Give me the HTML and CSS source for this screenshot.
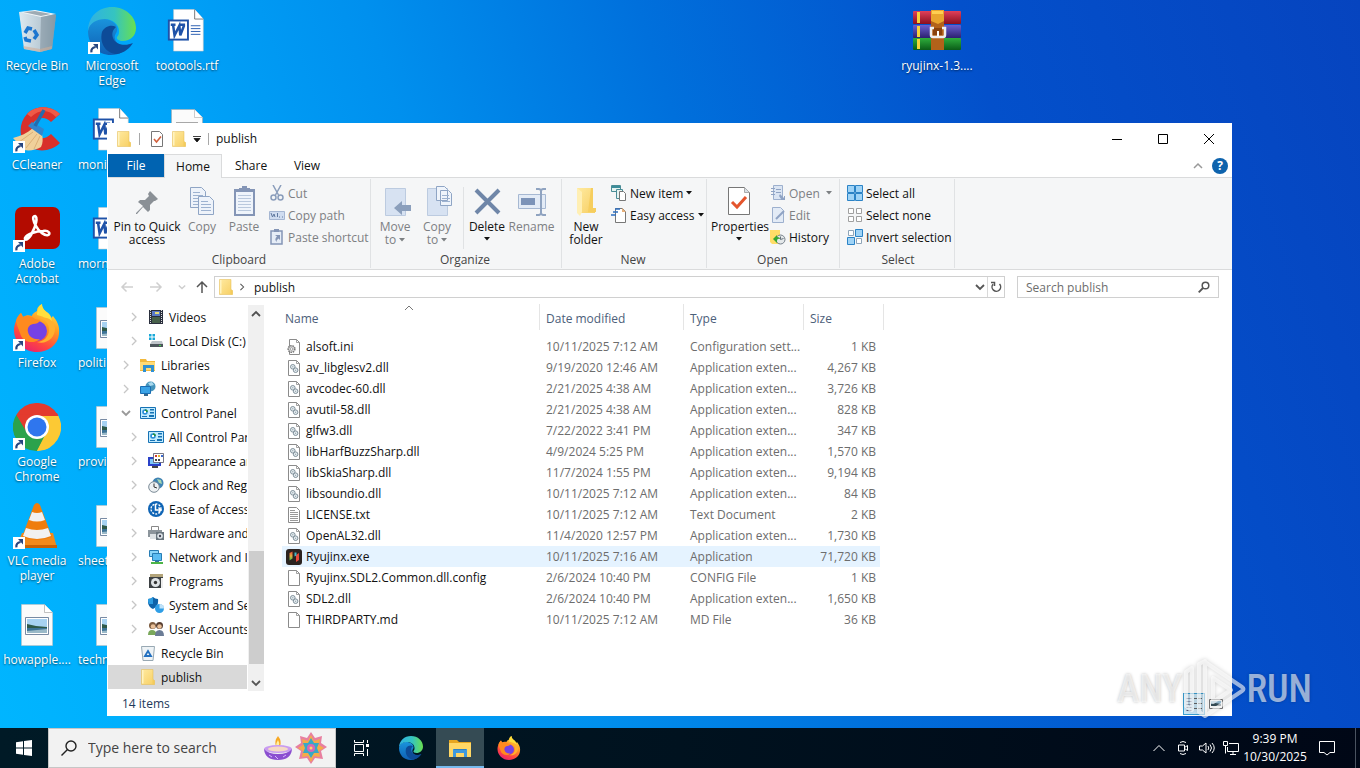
FILE: index.html
```html
<!DOCTYPE html>
<html lang="en">
<head>
<meta charset="utf-8">
<title>publish</title>
<link rel="stylesheet" href="styles.css">
</head>
<body>
<svg class="defs" aria-hidden="true">
  <defs>
    <linearGradient id="gEdgeA" x1="0" y1="0" x2="1" y2="0"><stop offset="0" stop-color="#2fb1e4"/><stop offset=".55" stop-color="#35c4c0"/><stop offset="1" stop-color="#69e04e"/></linearGradient>
    <linearGradient id="gEdgeB" x1="0" y1="0" x2="0" y2="1"><stop offset="0" stop-color="#1a94dc"/><stop offset="1" stop-color="#0f5fb4"/></linearGradient>
    <linearGradient id="gFox" x1=".8" y1="0" x2=".3" y2="1"><stop offset="0" stop-color="#fff04a"/><stop offset=".4" stop-color="#ff9a22"/><stop offset=".75" stop-color="#ff4640"/><stop offset="1" stop-color="#e8216f"/></linearGradient>
    <linearGradient id="gFolder" x1="0" y1="0" x2="1" y2="1"><stop offset="0" stop-color="#ffeaa0"/><stop offset="1" stop-color="#f7cf63"/></linearGradient>
    <linearGradient id="gBin" x1="0" y1="0" x2="1" y2="0"><stop offset="0" stop-color="#e9edf0"/><stop offset=".6" stop-color="#c3ccd3"/><stop offset="1" stop-color="#8fa0ac"/></linearGradient>
    <linearGradient id="gRed" x1="0" y1="0" x2="0" y2="1"><stop offset="0" stop-color="#e0405a"/><stop offset="1" stop-color="#8a1020"/></linearGradient>
    <linearGradient id="gPurple" x1="0" y1="0" x2="0" y2="1"><stop offset="0" stop-color="#6b5fd0"/><stop offset="1" stop-color="#2c2070"/></linearGradient>
    <linearGradient id="gGreen" x1="0" y1="0" x2="0" y2="1"><stop offset="0" stop-color="#2fae3c"/><stop offset="1" stop-color="#0a5c18"/></linearGradient>
    <linearGradient id="gRyu" x1="0" y1="0" x2="0" y2="1"><stop offset="0" stop-color="#e9483a"/><stop offset=".5" stop-color="#e8b040"/><stop offset="1" stop-color="#3ac04c"/></linearGradient>
  </defs>
  <symbol id="shortcut" viewBox="0 0 12 12"><path fill="#fff" d="M0 0h12v12H0z"/><path fill="none" stroke="#27457f" stroke-width="2.2" d="M3.4 10.4C3 7.5 4.5 5.5 7.6 5"/><path fill="#27457f" d="M5 2h5v5.4z"/></symbol>
  <symbol id="edge" viewBox="0 0 48 48">
    <path fill="url(#gEdgeB)" d="M0 24C1 15 9 11 17 12c8 1 13 6 12 12-1 3-3 4-2 8 1 5 9 9 17 4C39 44 31 48 23 48 10 48 0 38 0 24z"/>
    <path fill="#0d4b98" d="M14 25c-3 12 5 22 15 22 7-1 13-6 16-11-6 3-17 3-20-5-2-6 1-9 3-11-5-3-12 0-14 5z"/>
    <path fill="url(#gEdgeA)" d="M0 24C0 9 11 0 24 0c14 0 24 10 24 21 0 8-6 13-13 13-4 0-7-2-6-4 2-2 2-4 2-6 0-7-7-12-14-12C9 12 1 16 0 24z"/>
  </symbol>
  <symbol id="firefox" viewBox="0 0 46 48">
    <path fill="url(#gFox)" d="M2 17c1-4 3-6 5-8l2 4c3-2 6-2 9-1 0-2 3-4 5-5 0-4 3-6 5-7 0 4 2 6 6 9 2 2 3 3 3 5l2-2c4 5 7 10 6 18C44 41 34 48 23 48 10 48 0 38 0 26c0-4 1-6 2-9z"/>
    <path fill="#ffdf3c" d="M28 0c0 4 2 6 6 9 3 3 4 6 4 11l-4-2c-1-4-6-6-11-7 0-4 2-9 5-11z"/>
    <circle cx="23" cy="27" r="10" fill="#7542e5"/>
    <path fill="#ff8a1f" d="M2 17c1-4 3-6 5-8l2 4c4-2 9-1 12 2l5 1c-1 3-4 4-7 4-4 1-6 4-5 8 1 5 6 8 12 7-7 6-18 3-20-6-1-3-3-7-4-12z"/>
    <path fill="#ffb02e" d="M25 14c6 1 10 5 10 12 0 7-6 12-12 12 9 3 18-4 18-13 0-8-7-13-16-11z"/>
  </symbol>
  <symbol id="wordfile" viewBox="0 0 40 46">
    <path fill="#fff" stroke="#c9c9c9" stroke-width=".6" d="M6 .5h22l9 10V44H6z"/><path fill="#fff" stroke="#555" stroke-width=".8" d="M28 .5v10h9"/>
    <path stroke="#2a5db0" stroke-width="1" d="M24 17.5h10M24 20.5h10M24 23.5h10M24 26.5h10"/>
    <path fill="#1f52a8" d="M0 11h22v22H0z"/><path fill="#fff" d="M2 13h18v18H2z"/>
    <path fill="none" stroke="#1f52a8" stroke-width="2.6" d="M3 16.500h5M12 16.500h6M5.500 17l1.500 10.500L12 17.500l1 10L17 17"/>
  </symbol>
  <symbol id="picfile" viewBox="0 0 32 42">
    <path fill="#fbfbfb" stroke="#c4c4c4" stroke-width=".6" d="M.5.500h23l8 8V41.500H.5z"/><path fill="#fff" stroke="#999" stroke-width=".6" d="M23.500.500v8h8"/>
    <path fill="#fff" stroke="#556c8c" stroke-width=".8" d="M4.500 13.500h23v17h-23z"/><path fill="#a7d2f2" d="M6 15h20v8H6z"/><path fill="#2e5948" d="M6 20l9 2 11 1v2H6z"/><path fill="#3d7396" d="M6 24h20v5H6z"/><path fill="#9ab9c8" d="M6 27l20-2v4H6z"/>
  </symbol>
  <symbol id="folder" viewBox="0 0 14 16"><path fill="url(#gFolder)" stroke="#e3b94f" stroke-width=".5" d="M.5.500h11.500v10l1.500 1v4H.5z"/><path fill="#f4cb5c" d="M11.500 10.500l2 1v4h-2z"/><path fill="#fff3c0" d="M1 1h1.500v13.500H1z"/></symbol>
  <symbol id="chev" viewBox="0 0 8 10"><path fill="none" stroke="currentColor" stroke-width="1.300" d="M2 1l4 4-4 4"/></symbol>
  <symbol id="chevdown" viewBox="0 0 10 10"><path fill="none" stroke="currentColor" stroke-width="1.800" d="M1 3l4 4 4-4"/></symbol>
  <symbol id="caret" viewBox="0 0 6 4"><path fill="currentColor" d="M0 0h6L3 3.500z"/></symbol>
  <symbol id="dll" viewBox="0 0 14 16"><path fill="#fff" stroke="#8b8b8b" d="M1.500.500h8l3 3v12h-11z"/><path fill="none" stroke="#8b8b8b" stroke-width=".8" d="M9.500.500v3h3"/><g fill="#e4ecf0" stroke="#80909a"><circle cx="5.800" cy="6.800" r="2.300"/><circle cx="8.600" cy="10.200" r="2.300"/></g><path fill="#80909a" d="M5.300 6.300h1v1h-1zM8.100 9.700h1v1h-1z"/></symbol>
  <symbol id="ini" viewBox="0 0 14 16"><path fill="#fff" stroke="#8b8b8b" d="M2.500.500h7l3 3v12h-10z"/><path fill="none" stroke="#8b8b8b" stroke-width=".8" d="M9.500.500v3h3"/><circle cx="4.500" cy="10" r="3.300" fill="#ddd" stroke="#777" stroke-width="1.600" stroke-dasharray="1.500 .8"/><circle cx="4.500" cy="10" r="1.300" fill="#fff" stroke="#777" stroke-width=".6"/></symbol>
  <symbol id="txt" viewBox="0 0 14 16"><path fill="#fff" stroke="#8b8b8b" d="M1.500.500h8l3 3v12h-11z"/><path stroke="#999" d="M3 3.500h5M3 5.500h8M3 7.500h8M3 9.500h8M3 11.500h8M3 13.500h8"/></symbol>
  <symbol id="blank" viewBox="0 0 14 16"><path fill="#fff" stroke="#8b8b8b" d="M1.500.500h8l3 3v12h-11z"/><path fill="none" stroke="#8b8b8b" stroke-width=".8" d="M9.500.500v3h3"/></symbol>
  <symbol id="ryu" viewBox="0 0 16 16"><rect width="16" height="16" rx="3" fill="#2b2320"/><path fill="url(#gRyu)" d="M3.500 4l3-1.500v7l-3 2z"/><path fill="#e9483a" d="M10 6l3-2v7l-3 2z"/><path fill="#42b9c6" d="M8.500 3.500h2v3l-2 1z"/></symbol>
  <symbol id="cpanel" viewBox="0 0 16 12"><path fill="#bfeaff" stroke="#1672b4" d="M.5.500h15v11H.5z"/><circle cx="5" cy="5" r="2.800" fill="#2d8fd8"/><path fill="#27933e" d="M5 2.200A2.800 2.800 0 0 1 7.800 5H5z"/><path fill="#fff" d="M4 4h2v2H4z"/><path fill="#1672b4" d="M2 9h5v1H2zM10 2h4v1.500h-4zM10 5h4v1.500h-4zM9 8h5v2H9z"/></symbol>
</svg>

<main class="desktop">
  <a href="#" class="shortcut c1 r1"><svg class="pic" viewBox="0 0 48 48"><path fill="url(#gBin)" d="M6 5l37 3-4 34-12 3-16-3z" opacity=".95"/><path fill="#f4f7f9" d="M6 5l16-2 21 4-15 3z"/><path fill="#9eabb4" d="M10 5l12-1 16 3-10 2z"/><path fill="#8495a0" opacity=".6" d="M28 10l15-3-4 35-12 3z"/><path fill="#cfae98" opacity=".6" d="M10 39l17 3 12-3-.4 3L27 45 11 42z"/><g fill="none" stroke="#1c76cf" stroke-width="3.500"><path d="M12 26l3-5 4 1M21 23l3 5-3 4M18 34l-5-1-1-3"/></g></svg><span>Recycle Bin</span></a>
  <a href="#" class="shortcut c2 r1"><svg class="pic"><use href="#edge"/></svg><svg class="badge"><use href="#shortcut"/></svg><span>Microsoft Edge</span></a>
  <a href="#" class="shortcut c3 r1"><svg class="pic doc"><use href="#wordfile"/></svg><span>tootools.rtf</span></a>
  <a href="#" class="shortcut c13 r1"><svg class="pic" viewBox="0 0 48 48"><rect y="4" width="48" height="13" rx="1" fill="url(#gRed)"/><rect y="18" width="48" height="13" rx="1" fill="url(#gPurple)"/><rect y="31" width="48" height="12" rx="1" fill="url(#gGreen)"/><path fill="#f6d33a" d="M4 5h3v11H4zM4 19h3v11H4zM4 32h3v10H4z"/><path fill="#b3621a" d="M18 3h13v40H18z"/><path fill="#e9a52e" d="M18 3h13v11l-6 3-7-3z"/><path fill="#ffcf52" d="M19 4h11v3H19z"/><path fill="#8a420e" d="M20 21h9v7h-9z"/><path fill="none" stroke="#eee" stroke-width="2.500" d="M21 21h-3v7q0 2 2 2h10q2 0 2-2v-7h-3"/><path stroke="#fff" stroke-width="2" d="M25 24v5"/></svg><span class="line">ryujinx-1.3....</span></a>

  <a href="#" class="shortcut c1 r2"><svg class="pic" viewBox="0 0 48 48"><path fill="#d8302b" d="M47 8C38-1 22-1 14 8 5 18 6 32 14 39c9 8 24 7 33-2l-9-9c-5 5-12 6-16 1-4-4-4-10 0-14 5-4 11-4 16 1z"/><path fill="#ef5a47" d="M47 8C38-1 22-1 14 8l4 3C26 3 36 3 43 11z"/><path fill="#f0d09a" d="M20 22c-6 5-12 8-20 10l11 12c6 1 12 0 17-3 2-4 2-8 1-13z"/><path stroke="#dcb077" stroke-width="1" d="M20 26L6 36M24 28L13 42M27 30l-6 13"/><path fill="#2f86cf" d="M15 20l4-4 12 7-2 7z"/><path stroke="#246cae" stroke-width="3.500" d="M22 20L31 4"/></svg><svg class="badge"><use href="#shortcut"/></svg><span>CCleaner</span></a>
  <a href="#" class="shortcut c2 r2 cut"><svg class="pic doc"><use href="#wordfile"/></svg><span>moni</span></a>
  <a href="#" class="shortcut c3 r2"><svg class="pic page" viewBox="0 0 32 42"><path fill="#fbfbfb" stroke="#aaa" stroke-width=".6" d="M.5.500h23l8 8V41.500H.5z"/><path fill="#fff" stroke="#aaa" stroke-width=".6" d="M23.500.500v8h8"/><path stroke="#a8a8a8" d="M5 13.500h22"/></svg></a>

  <a href="#" class="shortcut c1 r3"><svg class="pic" viewBox="0 0 48 48"><rect x="2" y="2" width="45" height="42" rx="7" fill="#b30b00"/><path fill="none" stroke="#fff" stroke-width="2.600" stroke-linejoin="round" d="M22 11c-3 0-2 5 1 10 3 6 9 10 12 9s1-5-5-4c-7 0-16 3-18 7-1 3 4 2 7-5 4-7 6-16 3-17z"/></svg><svg class="badge"><use href="#shortcut"/></svg><span>Adobe Acrobat</span></a>
  <a href="#" class="shortcut c2 r3 cut"><svg class="pic doc"><use href="#wordfile"/></svg><span>morn</span></a>

  <a href="#" class="shortcut c1 r4"><svg class="pic"><use href="#firefox"/></svg><svg class="badge"><use href="#shortcut"/></svg><span>Firefox</span></a>
  <a href="#" class="shortcut c2 r4 cut"><svg class="pic page"><use href="#picfile"/></svg><span>politi</span></a>

  <a href="#" class="shortcut c1 r5"><svg class="pic" viewBox="0 0 48 48"><path fill="#e33b2e" d="M24 24L3.200 12A24 24 0 0 1 44.800 12z"/><path fill="#2ba24c" d="M24 24L24 48A24 24 0 0 1 3.200 12z"/><path fill="#fcc934" d="M24 24L44.800 12A24 24 0 0 1 24 48z"/><path fill="#e33b2e" d="M3.200 12l11 18L24 13h21.300L44 10z"/><path fill="#2ba24c" d="M3.200 12l10.400 18 10.400 5 9-5L24 48 10 43 1 31z"/><path fill="#fcc934" d="M24 13h21.300L48 24l-4 13-10 9-10 2 10-18z"/><circle cx="24" cy="24" r="12" fill="#fff"/><circle cx="24" cy="24" r="9.500" fill="#2f76ee"/></svg><svg class="badge"><use href="#shortcut"/></svg><span>Google Chrome</span></a>
  <a href="#" class="shortcut c2 r5 cut"><svg class="pic page"><use href="#picfile"/></svg><span>provi</span></a>

  <a href="#" class="shortcut c1 r6"><svg class="pic" viewBox="0 0 48 48"><path fill="#f18a1c" d="M9 31h31l4 15H3z"/><path fill="#c96205" d="M3 43h41v3H3z"/><path fill="#ef7d0c" d="M21 3q3-4 6 0l12 32q-15 6-30 0z"/><path fill="#f1f1f1" d="M19 10q5 2 10 0l3 8q-8 3-16 0zM13 26q11 4 22 0l3 8q-14 6-28 0z"/></svg><svg class="badge"><use href="#shortcut"/></svg><span>VLC media player</span></a>
  <a href="#" class="shortcut c2 r6 cut"><svg class="pic page"><use href="#picfile"/></svg><span>sheet</span></a>

  <a href="#" class="shortcut c1 r7"><svg class="pic page"><use href="#picfile"/></svg><span>howapple....</span></a>
  <a href="#" class="shortcut c2 r7 cut"><svg class="pic page"><use href="#picfile"/></svg><span>techn</span></a>
</main>

<section class="window" aria-label="publish">
  <header class="titlebar">
    <svg class="fold"><use href="#folder"/></svg><i class="vsep"></i>
    <button class="plain" aria-label="Properties"><svg class="s16" viewBox="0 0 16 16"><path fill="#fff" stroke="#777" d="M2.500.500h8l3 3v12h-11z"/><path fill="none" stroke="#d1603d" stroke-width="1.600" d="M5 8l2.500 3L12 5.500"/></svg></button>
    <button class="plain" aria-label="New folder"><svg class="fold"><use href="#folder"/></svg></button>
    <button class="plain" aria-label="Customize"><svg class="qat" viewBox="0 0 8 8"><path d="M0 1.500h8M1 3.500h6L4 7z" stroke="#111" fill="#111" stroke-width=".8"/></svg></button>
    <i class="vsep"></i><h1>publish</h1>
    <div class="controls">
      <button aria-label="Minimize"><svg viewBox="0 0 12 12"><path d="M1 6.500h10"/></svg></button>
      <button aria-label="Maximize"><svg viewBox="0 0 12 12"><path d="M1.500 1.500h9v9h-9z"/></svg></button>
      <button aria-label="Close"><svg viewBox="0 0 12 12"><path d="M1 1l10 10M11 1L1 11"/></svg></button>
    </div>
  </header>
  <nav class="tabs">
    <button class="file">File</button><button class="on">Home</button><button>Share</button><button>View</button>
    <div class="help"><button class="plain" aria-label="Collapse"><svg class="s10 dim" viewBox="0 0 10 10"><path fill="none" stroke="currentColor" stroke-width="1.500" d="M1 7l4-4 4 4"/></svg></button>
    <button class="qmark" aria-label="Help">?</button></div>
  </nav>
  <div class="ribbon">
    <div class="group clip"><div class="tools">
      <button class="big pin"><svg viewBox="0 0 32 32"><path fill="#8a9096" d="M19 5l8 8-3 2-1 0-4 4v5l-2 2-5-5-6 7-1 0 0-1 7-7-5-4 2-2h5l4-4-1-2z"/></svg>Pin to Quick access</button>
      <button class="big off"><svg viewBox="0 0 32 32"><g fill="#eef3fa" stroke="#8fa5c5"><path d="M4.500 1.500h11l4 4v16h-15z"/><path d="M12.500 10.500h11l4 4v14h-15z"/></g><path fill="none" stroke="#9db2d0" d="M7 6.500h7M7 9.500h10M7 12.500h5M7 15.500h5M7 18.500h5M15 15.500h7M15 18.500h10M15 21.500h10M15 24.500h10"/></svg>Copy</button>
      <button class="big off"><svg viewBox="0 0 32 32"><path fill="#8495b6" d="M6 3h21v27H6z"/><path fill="#eff4fb" d="M8 6h17v22H8z"/><path fill="#8495b6" d="M14 0h5v2h3v4H11V2h3z"/><path stroke="#b9c8dd" d="M10 9.500h13M10 12.500h13M10 15.500h13M10 18.500h13M10 21.500h13M10 24.500h13"/></svg>Paste</button>
      <div class="small">
        <button class="off"><svg class="s16" viewBox="0 0 16 16"><g fill="none" stroke="#8a9dbb" stroke-width="1.500"><path d="M4 0l5.500 10M12 0L6.500 10"/><circle cx="4.500" cy="12.500" r="2.500"/><circle cx="11.500" cy="12.500" r="2.500"/></g></svg>Cut</button>
        <button class="off"><svg class="s16" viewBox="0 0 16 16"><path fill="#cfdcf0" stroke="#a5b6d2" d="M.5 4.500h15v8H.5z"/><path fill="none" stroke="#5f789f" d="M2 6l1.500 4L5 7l1 3M8.500 6v4M10 10h1M13 10h1"/></svg>Copy path</button>
        <button class="off"><svg class="s16" viewBox="0 0 16 16"><path fill="#e6edf7" stroke="#8495b6" stroke-width="1.500" d="M2 2h11v13H2z"/><path fill="#8495b6" d="M5 0h5v3H5zM6 6h5v5L9.500 9.500Q7 11 7.500 13 5 10 8 7.500z"/></svg>Paste shortcut</button>
      </div></div><div class="caption">Clipboard</div></div>
    <div class="group org"><div class="tools">
      <button class="big off"><svg viewBox="0 0 32 32"><path fill="#d7e2f2" stroke="#bccbe0" d="M6.500 2.500h20v27h-20z"/><path fill="#8b9fbc" d="M15 22l8-7v4h9v6h-9v4z"/></svg>Move to <svg class="car"><use href="#caret"/></svg></button>
      <button class="big off"><svg viewBox="0 0 32 32"><path fill="#d7e2f2" stroke="#bccbe0" d="M6.500 2.500h20v27h-20z"/><g fill="#eff4fb" stroke="#8fa5c5"><path d="M15.500.500h8l3 3v11h-11zM19.500 4.500h8l3 3v12h-11z"/></g><path stroke="#9db2d0" d="M21 9.500h7M21 12.500h8M21 15.500h8"/></svg>Copy to <svg class="car"><use href="#caret"/></svg></button>
      <i class="tsep"></i>
      <button class="big"><svg viewBox="0 0 32 32"><path stroke="#6f86a8" stroke-width="4" d="M5 4l23 23M28 4L5 27"/></svg>Delete<svg class="car under"><use href="#caret"/></svg></button>
      <button class="big off ren"><svg viewBox="0 0 32 32"><path fill="#e3ebf6" stroke="#a6b8d2" d="M2.500 8.500h27v14h-27z"/><path fill="#7c93b8" d="M5 12h14v7H5z"/><path fill="none" stroke="#8fa3c0" stroke-width="2" d="M20 3h3l2 1 2-1h3M25 4v24M20 29h3l2-1 2 1h3"/></svg>Rename</button>
      </div><div class="caption">Organize</div></div>
    <div class="group new"><div class="tools">
      <button class="big"><svg viewBox="0 0 32 32"><path fill="url(#gFolder)" d="M7 2h14v23l4 1v1H7z"/><path fill="#ffefb4" d="M7 2l5 4v20l-2 4-3-3z"/><path fill="#f6ce5e" d="M21 2h2v20h3v4h-8z"/></svg>New folder</button>
      <div class="small">
        <button><svg class="s16" viewBox="0 0 16 16"><g fill="#e6f3f1" stroke="#4a8c96"><path d="M.5.500h9v6h-9z"/><path d="M5.500 4.500h6v9h-6z"/></g><path fill="#fff" stroke="#777" d="M8.500 6.500h4l2 2v7h-6z"/><path stroke="#3b8d9a" stroke-width="2" d="M1 2h8"/></svg>New item <svg class="car"><use href="#caret"/></svg></button>
        <button><svg class="s16" viewBox="0 0 16 16"><path fill="#fff" stroke="#777" d="M4.500 1.500h7l3 3v11h-10z"/><path fill="none" stroke="#2e6fc0" stroke-width="1.300" d="M4 2h5M2 5h5M0 8h5"/><path fill="#e7b07a" d="M11 1l4 4h-4z"/></svg>Easy access <svg class="car"><use href="#caret"/></svg></button>
      </div></div><div class="caption">New</div></div>
    <div class="group open"><div class="tools">
      <button class="big prop"><svg viewBox="0 0 32 32"><path fill="#fff" stroke="#777" d="M5.500 1.500h16l5 5v22h-21z"/><path fill="#d9dfe5" stroke="#999" stroke-width=".8" d="M21.500 1.500v5h5"/><path fill="none" stroke="#e4552d" stroke-width="3" d="M9 16l5 5L23 11"/></svg>Properties<svg class="car under"><use href="#caret"/></svg></button>
      <div class="small">
        <button class="off"><svg class="s16" viewBox="0 0 16 16"><path fill="#dbe5f3" stroke="#9db0ce" d="M3.500.500h9v14h-9z"/><path stroke="#8fa3c4" d="M1 3.500h4M1 6.500h4M1 9.500h4M6 4.500h5M6 7.500h5"/><path fill="#8fa3c4" d="M10 9l4 4v-2h1v4h-4v-1l-2-3z"/></svg>Open <svg class="car wide"><use href="#caret"/></svg></button>
        <button class="off"><svg class="s16" viewBox="0 0 16 16"><path fill="#e3ebf6" stroke="#9db0ce" d="M2.500.500h8l3 3v12h-11z"/><path stroke="#8fa3c4" stroke-width="2" d="M6 12l8-8"/></svg>Edit</button>
        <button><svg class="s16" viewBox="0 0 16 16"><path fill="#ffdd68" d="M0 1h10v14H2L0 13z"/><circle cx="10.500" cy="10.500" r="4.500" fill="#e4e8ea" stroke="#75808a"/><path fill="none" stroke="#66727c" d="M10.500 7.500v3l3-1"/><path fill="#38a632" d="M3 10l4-4v2q3 0 3 2-3-1-3 2v2z"/></svg>History</button>
      </div></div><div class="caption">Open</div></div>
    <div class="group sel"><div class="tools">
      <div class="small">
        <button><svg class="s16" viewBox="0 0 16 16"><path fill="#9fd3f6" stroke="#2b83c6" d="M.5.500h7v7h-7zM8.500.500h7v7h-7zM.5 8.500h7v7h-7zM8.500 8.500h7v7h-7z"/></svg>Select all</button>
        <button><svg class="s16" viewBox="0 0 16 16"><path fill="#fff" stroke="#a0a0a0" d="M1.500 1.500h5v5h-5zM9.500 1.500h5v5h-5zM1.500 9.500h5v5h-5zM9.500 9.500h5v5h-5z"/></svg>Select none</button>
        <button><svg class="s16" viewBox="0 0 16 16"><path fill="#fff" stroke="#8fa5b8" d="M1.500 1.500h5v5h-5zM9.500 9.500h5v5h-5z"/><path fill="#9fd3f6" stroke="#2b83c6" d="M8.500.500h7v7h-7zM.5 8.500h7v7h-7z"/></svg>Invert selection</button>
      </div></div><div class="caption">Select</div></div>
  </div>

  <div class="navbar">
    <button class="plain faint" aria-label="Back"><svg class="s14" viewBox="0 0 14 14"><path d="M13 7H2M6.500 2.500L2 7l4.500 4.500"/></svg></button>
    <button class="plain faint" aria-label="Forward"><svg class="s14" viewBox="0 0 14 14"><path d="M1 7h11M7.500 2.500L12 7l-4.500 4.500"/></svg></button>
    <button class="plain faint recent" aria-label="Recent"><svg class="s8"><use href="#chevdown"/></svg></button>
    <button class="plain up" aria-label="Up"><svg class="s14" viewBox="0 0 14 14"><path d="M7 13V2M2 7l5-5 5 5"/></svg></button>
    <div class="address"><svg class="fold"><use href="#folder"/></svg><svg class="s8 grey"><use href="#chev"/></svg><span class="crumb">publish</span>
      <button class="plain grey" aria-label="Locations"><svg class="s10"><use href="#chevdown"/></svg></button>
      <button class="plain refresh" aria-label="Refresh"><svg class="s12" viewBox="0 0 12 12"><path fill="none" stroke="#555" stroke-width="1.500" d="M9.500 3A4.300 4.300 0 1 1 3 3.200M1 1.500h3.500V5"/></svg></button>
    </div>
    <label class="search"><input type="search" placeholder="Search publish" aria-label="Search publish"><svg class="s12" viewBox="0 0 12 12"><circle cx="7.500" cy="4.500" r="3.300" fill="none" stroke="#555" stroke-width="1.500"/><path stroke="#555" stroke-width="1.800" d="M5 7L.7 11.300"/></svg></label>
  </div>

  <div class="body">
    <ul class="tree">
      <li class="sub"><svg class="tw"><use href="#chev"/></svg><svg class="s16" viewBox="0 0 16 16"><path fill="#2a2f3d" d="M1 1h14v14H1z"/><path fill="#5a7ac8" d="M4 2h8v5H4z"/><path fill="#47604a" d="M4 8h8v6H4z"/><path fill="#e5dc78" d="M7 3h4v2H7z"/><path stroke="#ddd" stroke-dasharray="1 1" d="M2.500 1v14M13.500 1v14"/></svg>Videos</li>
      <li class="sub"><svg class="tw"><use href="#chev"/></svg><svg class="s16" viewBox="0 0 16 16"><path fill="#18a8d8" d="M1 1h2.500v2.500H1zM4.500 1H7v2.500H4.500zM1 4.500h2.500V7H1zM4.500 4.500H7V7H4.500z"/><path fill="#bfc5ca" d="M4 8h10l1 3H2z"/><path fill="#4d565c" d="M2 11h13v3H2z"/><path fill="#42d34a" d="M11 12h2v1h-2z"/></svg>Local Disk (C:)</li>
      <li><svg class="tw"><use href="#chev"/></svg><svg class="s16" viewBox="0 0 16 16"><path fill="#f2b93c" d="M0 2h6l1 2h8v10H0z"/><path fill="#ffdb76" d="M0 5h15v8H0z"/><path fill="#2f91d3" d="M3 8h11v7h-3v-4H6v4H3z"/></svg>Libraries</li>
      <li><svg class="tw"><use href="#chev"/></svg><svg class="s16" viewBox="0 0 16 16"><circle cx="10.500" cy="5.500" r="5" fill="#4594bb"/><path fill="#a9d9ee" d="M8 2l4-1 2 3-4 1z"/><path fill="#3aa3e6" stroke="#1a6eb3" d="M.5 5.500h10v7H.5z"/><path fill="#35698d" d="M4 13h4v2H4z"/></svg>Network</li>
      <li><svg class="tw open-tw"><use href="#chevdown"/></svg><svg class="s16"><use href="#cpanel"/></svg>Control Panel</li>
      <li class="sub"><svg class="tw"><use href="#chev"/></svg><svg class="s16"><use href="#cpanel"/></svg>All Control Panel Items</li>
      <li class="sub"><svg class="tw"><use href="#chev"/></svg><svg class="s16" viewBox="0 0 16 16"><path fill="#2a41c8" d="M0 4h13v9H0z"/><path fill="#7ec7f7" d="M2 6h9v5H2z"/><path fill="#fff" stroke="#556" stroke-width=".8" d="M5.500.500h10v9h-10z"/><path fill="#d33c2c" d="M7 2h2v2H7z"/><path fill="#e7b52c" d="M10 2h2v2h-2z"/><path fill="#3a6ad0" d="M13 2h2v2h-2z"/><path fill="#444" d="M7 6h2v2H7zM10 6h2v2h-2zM4 13h6v2H4z"/></svg>Appearance and Personalization</li>
      <li class="sub"><svg class="tw"><use href="#chev"/></svg><svg class="s16" viewBox="0 0 16 16"><circle cx="10" cy="6" r="5.500" fill="#3f83b3"/><path fill="#a7d6b0" d="M9 2l4 1 1 4-3-1z"/><circle cx="6" cy="10" r="5.300" fill="#eef1f3" stroke="#7b8a96"/><path fill="none" stroke="#333" d="M6 6.500V10l3 1"/></svg>Clock and Region</li>
      <li class="sub"><svg class="tw"><use href="#chev"/></svg><svg class="s16" viewBox="0 0 16 16"><circle cx="8" cy="8" r="8" fill="#0f64b5"/><circle cx="8" cy="8" r="5" fill="none" stroke="#fff" stroke-width="1.300" stroke-dasharray="2 1.200"/><path fill="none" stroke="#fff" stroke-width="1.500" d="M7.500 3v6H13M10.500 6.500L13 9l-2.500 2.500"/></svg>Ease of Access</li>
      <li class="sub"><svg class="tw"><use href="#chev"/></svg><svg class="s16" viewBox="0 0 16 16"><path fill="#fff" stroke="#888" d="M3.500 1.500h7v4h-7z"/><path fill="#8c959c" d="M0 5h14v7H0z"/><path fill="#dde2e5" d="M2 9h7v5H2z"/><path fill="#69757e" d="M8 7h8v8H8z"/><circle cx="12" cy="11" r="2.800" fill="#dfe6ea"/><circle cx="12" cy="11" r="1.200" fill="#445"/></svg>Hardware and Sound</li>
      <li class="sub"><svg class="tw"><use href="#chev"/></svg><svg class="s16" viewBox="0 0 16 16"><path fill="#8cd6fa" stroke="#287db5" d="M1.500 1.500h9v6h-9z"/><path fill="#5bbcf2" stroke="#287db5" d="M4.500 4.500h9v7h-9z"/><path fill="#347595" d="M7 12h4v2H7z"/><path fill="#4db548" d="M3 13h12v2H3z"/></svg>Network and Internet</li>
      <li class="sub"><svg class="tw"><use href="#chev"/></svg><svg class="s16" viewBox="0 0 16 16"><path fill="#b3a47a" d="M2 1h13v3H2z"/><path fill="#3c4043" d="M1 4h14v11H1z"/><circle cx="7.500" cy="9.500" r="4.500" fill="#dfe3e6"/><circle cx="7.500" cy="9.500" r="1.700" fill="#333"/><path fill="#eee" d="M13 5h2v10h-2z"/></svg>Programs</li>
      <li class="sub"><svg class="tw"><use href="#chev"/></svg><svg class="s16" viewBox="0 0 16 16"><path fill="#0e62a8" d="M0 2q3 0 5-2 2 2 5 2 1 7-5 10-6-3-5-10z"/><path fill="#2d9ce0" d="M5 0Q3 2 0 2q-.3 3 1 5h4z"/><circle cx="11.500" cy="11.500" r="4.500" fill="#2f9ee6"/><path fill="#fff" d="M11.500 11.500V7a4.500 4.500 0 0 1 4.500 4.500z" opacity=".7"/></svg>System and Security</li>
      <li class="sub"><svg class="tw"><use href="#chev"/></svg><svg class="s16" viewBox="0 0 16 16"><circle cx="4.500" cy="4.500" r="3.500" fill="#7d5b3e"/><circle cx="5" cy="5.500" r="2.300" fill="#e9bf98"/><path fill="#7aa85b" d="M0 14q0-5 4-5t5 5z"/><circle cx="11.500" cy="4.500" r="3.500" fill="#553c30"/><circle cx="11.500" cy="5.500" r="2.300" fill="#e9bf98"/><path fill="#6b7c96" d="M7 15q0-6 4.500-6t4.500 6z"/></svg>User Accounts</li>
      <li class="notw"><svg class="s16" viewBox="0 0 16 16"><path fill="#eef3f6" stroke="#98a8b3" d="M1.500 1.500h13l-1.500 14H3z"/><path fill="none" stroke="#2270c0" stroke-width="1.800" d="M5 11l3-5 3 5zM7 11h2"/></svg>Recycle Bin</li>
      <li class="notw current"><svg class="s16"><use href="#folder"/></svg>publish</li>
    </ul>
    <div class="scroll"><svg class="s10" viewBox="0 0 10 10"><path fill="none" stroke="#505050" stroke-width="1.800" d="M1 7l4-4 4 4"/></svg><i class="thumb"></i><svg class="s10 grey"><use href="#chevdown"/></svg></div>
    <div class="files">
      <table>
        <thead><tr><th class="n">Name<svg class="sort" viewBox="0 0 10 6"><path fill="none" stroke="#777" d="M1 5l4-4 4 4"/></svg></th><th class="d">Date modified</th><th class="t">Type</th><th class="s">Size</th></tr></thead>
        <tbody>
          <tr class="gap"><td colspan="4"></td></tr>
          <tr><td><svg class="fi"><use href="#ini"/></svg>alsoft.ini</td><td>10/11/2025 7:12 AM</td><td>Configuration sett...</td><td>1 KB</td></tr>
          <tr><td><svg class="fi"><use href="#dll"/></svg>av_libglesv2.dll</td><td>9/19/2020 12:46 AM</td><td>Application exten...</td><td>4,267 KB</td></tr>
          <tr><td><svg class="fi"><use href="#dll"/></svg>avcodec-60.dll</td><td>2/21/2025 4:38 AM</td><td>Application exten...</td><td>3,726 KB</td></tr>
          <tr><td><svg class="fi"><use href="#dll"/></svg>avutil-58.dll</td><td>2/21/2025 4:38 AM</td><td>Application exten...</td><td>828 KB</td></tr>
          <tr><td><svg class="fi"><use href="#dll"/></svg>glfw3.dll</td><td>7/22/2022 3:41 PM</td><td>Application exten...</td><td>347 KB</td></tr>
          <tr><td><svg class="fi"><use href="#dll"/></svg>libHarfBuzzSharp.dll</td><td>4/9/2024 5:25 PM</td><td>Application exten...</td><td>1,570 KB</td></tr>
          <tr><td><svg class="fi"><use href="#dll"/></svg>libSkiaSharp.dll</td><td>11/7/2024 1:55 PM</td><td>Application exten...</td><td>9,194 KB</td></tr>
          <tr><td><svg class="fi"><use href="#dll"/></svg>libsoundio.dll</td><td>10/11/2025 7:12 AM</td><td>Application exten...</td><td>84 KB</td></tr>
          <tr><td><svg class="fi"><use href="#txt"/></svg>LICENSE.txt</td><td>10/11/2025 7:12 AM</td><td>Text Document</td><td>2 KB</td></tr>
          <tr><td><svg class="fi"><use href="#dll"/></svg>OpenAL32.dll</td><td>11/4/2020 12:57 PM</td><td>Application exten...</td><td>1,730 KB</td></tr>
          <tr class="hover"><td><svg class="fi"><use href="#ryu"/></svg>Ryujinx.exe</td><td>10/11/2025 7:16 AM</td><td>Application</td><td>71,720 KB</td></tr>
          <tr><td><svg class="fi"><use href="#blank"/></svg>Ryujinx.SDL2.Common.dll.config</td><td>2/6/2024 10:40 PM</td><td>CONFIG File</td><td>1 KB</td></tr>
          <tr><td><svg class="fi"><use href="#dll"/></svg>SDL2.dll</td><td>2/6/2024 10:40 PM</td><td>Application exten...</td><td>1,650 KB</td></tr>
          <tr><td><svg class="fi"><use href="#blank"/></svg>THIRDPARTY.md</td><td>10/11/2025 7:12 AM</td><td>MD File</td><td>36 KB</td></tr>
        </tbody>
      </table>
    </div>
  </div>
  <footer class="status"><span>14 items</span>
    <button class="view on" aria-label="Details"><svg class="s16" viewBox="0 0 16 16"><path fill="none" stroke="#557" stroke-dasharray="2 1" d="M.5 2.500h5M.5 5.500h5M.5 8.500h5M.5 11.500h5M.5 14.500h5"/><path stroke="#666" d="M8 2.500h3M12 2.500h4M8 7.500h3M12 7.500h4M8 12.500h3M12 12.500h4"/></svg></button>
    <button class="view" aria-label="Large icons"><svg class="s14" viewBox="0 0 14 14"><path fill="#fff" stroke="#777" d="M.5 2.500h13v9H.5z"/><path fill="#9fc5dd" d="M2 4h10v3H2z"/><path fill="#39505a" d="M2 7l4-1 6 1v2H2z"/></svg></button>
  </footer>
</section>

<div class="watermark"><span>ANY</span><svg viewBox="0 0 64 62"><path fill="none" stroke="currentColor" stroke-width="4" stroke-linejoin="round" d="M4 14v34l6 4V10zM17 6v48l6 4V3zM23 4l37 25q3 2 0 4L23 58M31 20v24l18-12z"/></svg><span>RUN</span></div>

<footer class="taskbar">
  <button class="start" aria-label="Start"><svg class="s16" viewBox="0 0 16 16"><path fill="#fff" d="M0 2.200L7 1.200v6.300H0zM8 1l8-1v7.500H8zM0 8.500h7v6.300l-7-1zM8 8.500h8V16l-8-1z"/></svg></button>
  <label class="find"><svg class="s16" viewBox="0 0 16 16"><circle cx="10" cy="6" r="5" fill="none" stroke="#222" stroke-width="1.400"/><path stroke="#222" stroke-width="1.400" d="M6.500 9.500L.5 15.500"/></svg><input type="text" placeholder="Type here to search" aria-label="Type here to search">
    <svg class="fest" viewBox="0 0 64 34"><path fill="#f7a823" d="M15 5q4 5 2 10h-4q-2-5 2-10z"/><path fill="#fff0a0" d="M15 9q2 3 1 6h-3q0-3 2-6z"/><ellipse cx="15" cy="18" rx="14" ry="4" fill="#c99cf0"/><ellipse cx="15" cy="18" rx="10" ry="2.500" fill="#f5d9c5"/><path fill="#8b4fd0" d="M1 18q4 5 14 5t14-5q-1 11-14 11T1 18z"/><path stroke="#d9b6ff" d="M6 24l3 2M12 25l3 3M23 24l-3 2"/><path fill="#e87f9f" d="M48 1l4 6 7-2-1 7 6 4-6 4 2 8-8-1-4 6-4-6-8 1 2-8-6-4 6-4-1-7 7 2z"/><path fill="#f4ac48" d="M48 4l3 6 6-2-1 6 5 3-5 3 1 6-6-1-3 6-3-6-6 1 1-6-5-3 5-3-1-6 6 2z"/><path fill="#38a8c6" d="M48 7l3 5 5 0-2 5 2 5-5 0-3 5-3-5-5 0 2-5-2-5 5 0z"/><circle cx="48" cy="17" r="4" fill="#d868b4"/><circle cx="48" cy="17" r="1.500" fill="#ffd564"/></svg></label>
  <button class="task tv" aria-label="Task view"><svg class="s16" viewBox="0 0 16 16"><path fill="none" stroke="#fff" d="M1.500 4.500h9v7h-9zM1.500 0v2.500h9V0M1.500 16v-2.500h9V16M14.500 0v3M14.500 9v7"/><path fill="#fff" d="M13 4h3v3h-3z"/></svg></button>
  <button class="task" aria-label="Edge"><svg class="s24"><use href="#edge"/></svg></button>
  <button class="task active" aria-label="File Explorer"><svg class="s24" viewBox="0 0 24 24"><path fill="#e7a61f" d="M1 4h8l2 2h12v4H1z"/><path fill="#ffd765" d="M1 7h22v14H1z"/><path fill="#3f9ade" d="M5 13h14v8h-3v-4H8v4H5z"/><path fill="#2f7fbd" d="M6 13h12v1H6z"/></svg></button>
  <button class="task" aria-label="Firefox"><svg class="s24"><use href="#firefox"/></svg></button>
  <div class="tray">
    <button aria-label="Hidden icons"><svg class="s12" viewBox="0 0 12 12"><path d="M.5 9L6 3.500 11.500 9"/></svg></button>
    <button aria-label="Meet now"><svg class="s16" viewBox="0 0 16 16"><path d="M3.500 5h6v6h-6zM9.500 7.500L12.500 5.500v5l-3-2M5 2.500q3-2 6 0M5 13.500q3 2 6 0"/></svg></button>
    <button aria-label="Volume"><svg class="s16" viewBox="0 0 16 16"><path d="M.5 6h3l3.500-3v10L3.500 10h-3zM9 6q1.500 2 0 4M11 4.500q3 3.500 0 7M13 3q4.500 5 0 10"/></svg></button>
    <button aria-label="Network"><svg class="s16" viewBox="0 0 16 16"><path d="M.5 1.500h4v4h-4zM6 3.500h9.500v8H4.500V7M2.500 5.500v8M7 14.500h6M10 11.500v3"/></svg></button>
    <div class="clock"><time>9:39 PM</time><time>10/30/2025</time></div>
    <button class="note" aria-label="Notifications"><svg class="s16" viewBox="0 0 16 16"><path d="M.5 1.500h15v11H11L8 15l-3-2.500H.5z"/></svg></button>
    <button class="peek" aria-label="Show desktop"></button>
  </div>
</footer>
</body>
</html>
```
FILE: styles.css
```css
* { box-sizing: border-box; }
body {
  margin: 0;
  min-height: 100vh;
  display: flex;
  flex-direction: column;
  position: relative;
  overflow: hidden;
  font: 12px/15px "Open Sans", sans-serif;
  color: #111;
  background: linear-gradient(72deg, #00b6ff 0%, #00a6fa 22%, #0090ee 38%, #0070dc 55%, #0350cb 75%, #0644bf 100%);
}
button { font: inherit; color: inherit; background: none; border: 0; padding: 0; }
svg { display: block; flex: none; }
.defs { position: absolute; width: 0; height: 0; }
.s8 { width: 8px; height: 8px; }
.s10 { width: 10px; height: 10px; }
.s12 { width: 12px; height: 12px; }
.s14 { width: 14px; height: 14px; }
.s16 { width: 16px; height: 16px; }
.s24 { width: 24px; height: 24px; }
.fold { width: 14px; height: 16px; }
.grey { color: #555; }
.dim { color: #999; }

/* Desktop */
.desktop {
  flex: 1;
  display: grid;
  grid-template-columns: repeat(13, 75px);
  grid-auto-rows: 99px;
  align-content: start;
}
.shortcut {
  position: relative;
  display: flex;
  flex-direction: column;
  align-items: center;
  padding: 7px 4px 0 3px;
  color: #fff;
  text-align: center;
  text-decoration: none;
  text-shadow: 0 1px 2px rgba(0, 0, 0, .6);
}
.pic { width: 48px; height: 48px; margin-bottom: 3px; }
.pic.doc { padding: 2px 0; }
.pic.page { padding: 3px 0; }
.badge { position: absolute; left: 13px; top: 42px; width: 12px; height: 12px; }
.cut span { align-self: flex-start; }
.line { white-space: nowrap; }
.c1 { grid-column: 1; } .c2 { grid-column: 2; } .c3 { grid-column: 3; } .c13 { grid-column: 13; }
.r1 { grid-row: 1; } .r2 { grid-row: 2; } .r3 { grid-row: 3; } .r4 { grid-row: 4; }
.r5 { grid-row: 5; } .r6 { grid-row: 6; } .r7 { grid-row: 7; }

/* Window */
.window {
  position: absolute;
  inset: 123px 128px 52px 107px;
  display: flex;
  flex-direction: column;
  padding-left: 1px;
  background: #fff;
}
.titlebar { display: flex; align-items: center; height: 31px; padding-left: 9px; }
.titlebar .vsep { width: 1px; height: 12px; background: #a8a8a8; margin: 0 9px 0 8px; }
.titlebar .plain { margin-right: 7px; }
.qat { width: 8px; height: 8px; }
.titlebar .plain + .vsep { margin: 0 7px 0 0; }
.titlebar h1 { margin: 0; font-size: 12px; font-weight: 400; }
.controls { display: flex; align-self: stretch; margin-left: auto; }
.controls button { width: 46px; display: grid; place-items: center; }
.controls svg { width: 12px; height: 12px; fill: none; stroke: #000; stroke-width: 1; }

.tabs { display: flex; height: 24px; border-bottom: 1px solid #dadbdc; }
.tabs > button { width: 56px; }
.tabs .file { background: #0063b1; color: #fff; }
.tabs .on { width: 58px; margin: 0 1px -1px 0; background: #f5f6f7; border: 1px solid #dadbdc; border-bottom: 0; }
.help { display: flex; align-items: center; gap: 9px; margin-left: auto; padding-right: 4px; }
.qmark { width: 16px; height: 16px; border-radius: 8px; background: #0e63ad; color: #fff; font-weight: 700; }

.ribbon { display: flex; height: 92px; padding: 1px 0; background: #f5f6f7; border-bottom: 1px solid #dadbdc; }
.group { display: flex; flex-direction: column; justify-content: space-between; border-right: 1px solid #e0e2e4; }
.clip { width: 263px; padding-left: 5px; }
.org { width: 191px; padding-left: 3px; }
.new { width: 145px; padding-left: 3px; }
.open { width: 133px; padding-left: 4px; }
.sel { width: 115px; padding-left: 7px; }
.tools { display: flex; }
.big { width: 42px; padding-top: 7px; align-self: flex-start; line-height: 13px; }
.big > svg:first-child { width: 32px; height: 32px; margin: 0 auto 2px; }
.pin { width: 68px; }
.ren { width: 47px; }
.prop { width: 55px; }
.car { display: inline-block; width: 6px; height: 4px; vertical-align: 2px; }
.car.under { display: block; margin: 4px auto 0; }
.car.wide { margin-left: 3px; }
.off { color: #7d8083; }
.tsep { width: 1px; height: 62px; margin: 8px 2px 0 5px; background: #e0e2e4; }
.small { display: flex; flex-direction: column; padding: 3px 0 0 4px; }
.sel .small { padding-left: 0; }
.small button { display: flex; align-items: center; gap: 3px; height: 22px; white-space: nowrap; }
.caption { height: 18px; line-height: 20px; padding-right: 5px; text-align: center; color: #444; }

.navbar { display: flex; align-items: center; height: 34px; padding: 0 13px 0 12px; }
.navbar > .plain svg { fill: none; stroke: currentColor; stroke-width: 1.5; }
.navbar > .plain { margin-right: 15px; }
.faint { color: #cfcfcf; }
.navbar > .recent { margin-right: 9px; }
.navbar > .up { margin-right: 5px; color: #555; }
.address { flex: 1; display: flex; align-items: center; height: 22px; padding-left: 4px; border: 1px solid #d0d0d0; }
.address > .s8 { margin: 0 8px 0 5px; }
.crumb { flex: 1; }
.refresh { align-self: stretch; width: 17px; margin-left: 2px; border-left: 1px solid #d9d9d9; display: grid; place-items: center; }
.search { display: flex; align-items: center; width: 202px; height: 22px; margin-left: 12px; padding: 0 8px; border: 1px solid #d0d0d0; }
.search input { flex: 1; min-width: 0; border: 0; padding: 0; outline: 0; font: inherit; background: none; }
.search input::placeholder { color: #6d6d6d; opacity: 1; }

.body { flex: 1; display: flex; min-height: 0; }
.tree { width: 139px; margin: 0; padding: 1px 0 0; list-style: none; overflow: hidden; }
.tree li { display: flex; align-items: center; height: 24px; padding-left: 14px; white-space: nowrap; }
.tree li > .s16 { margin-right: 5px; }
.tree .sub { padding-left: 22px; }
.tree .notw { padding-left: 32px; }
.tw { width: 8px; height: 10px; margin-right: 10px; color: #c6c6c6; }
.tree .current { background: #d9d9d9; }
.open-tw { width: 10px; margin: 0 9px 0 -1px; color: #999; }
.scroll { width: 16px; margin: 1px 0 0 1px; display: flex; flex-direction: column; align-items: center; padding: 4px 0 3px; background: #f0f0f0; }
.thumb { width: 15px; height: 113px; margin-top: auto; margin-bottom: 14px; background: #cdcdcd; }
.files { flex: 1; padding: 0 0 0 18px; }
table { width: 602px; table-layout: fixed; border-collapse: separate; border-spacing: 0; }
th { height: 26px; padding: 2px 3px 0 6px; text-align: left; font-weight: 400; color: #4c607a; border-right: 1px solid #e5e5e5; }
.n { width: 258px; padding-left: 3px; position: relative; }
.d { width: 144px; } .t { width: 120px; } .s { width: 80px; }
.sort { position: absolute; left: 122px; top: 1px; width: 10px; height: 6px; }
td { height: 21px; padding: 0 6px; color: #6d6d6d; white-space: nowrap; }
.gap td { height: 6px; }
td:first-child { display: flex; align-items: center; padding: 0 0 0 4px; color: #111; }
td:last-child:not(:first-child) { padding: 0 4px 0 0; border-right: 4px solid transparent; background-clip: padding-box; text-align: right; }
.fi { width: 16px; height: 16px; margin-right: 4px; }
.hover td { background-color: #e5f3ff; }
.status { display: flex; align-items: center; height: 25px; padding: 0 5px 0 14px; color: #1e395b; }
.status span { flex: 1; }
.view { width: 22px; height: 22px; display: grid; place-items: center; }
.view.on { background: #cce8f8; border: 1px solid #3aa0d4; }

/* Watermark */
.watermark {
  position: absolute;
  right: 48px;
  bottom: 48px;
  display: flex;
  align-items: center;
  font: 500 38px/62px "Liberation Sans Narrow", "Roboto Condensed", "Roboto", sans-serif;
  color: rgba(255, 255, 255, .6);
  text-shadow: 0 0 3px rgba(0, 0, 0, .25);
  pointer-events: none;
}
.watermark svg { width: 64px; height: 62px; filter: drop-shadow(0 0 2px rgba(0, 0, 0, .3)); }

/* Taskbar */
.taskbar { display: flex; height: 40px; color: #fff; background: linear-gradient(90deg, #001a26, #00121f 50%, #000716); }
.start, .task { width: 48px; display: grid; place-items: center; }
.task { margin-right: 1px; }
.task.tv { width: 50px; }
.task.active { background: #354b54; border-bottom: 2px solid #76b9ed; padding-top: 2px; }
.find { display: flex; align-items: center; width: 288px; padding: 0 8px 0 12px; background: #f2f2f2; border: 1px solid #c6c6c6; }
.find input { flex: 1; min-width: 0; margin-left: 11px; padding: 0; border: 0; outline: 0; background: none; font: 14px/20px "Open Sans", sans-serif; }
.find input::placeholder { color: #444; opacity: 1; }
.fest { width: 64px; height: 34px; }
.tray { display: flex; align-items: center; margin-left: auto; }
.tray button { width: 24px; display: grid; place-items: center; }
.tray svg { fill: none; stroke: #fff; stroke-width: 1; }
.clock { width: 64px; display: flex; flex-direction: column; align-items: center; line-height: 18px; }
.tray .note { width: 40px; }
.tray .peek { width: 5px; height: 40px; margin-left: 8px; border-left: 1px solid #4a5360; }
```
